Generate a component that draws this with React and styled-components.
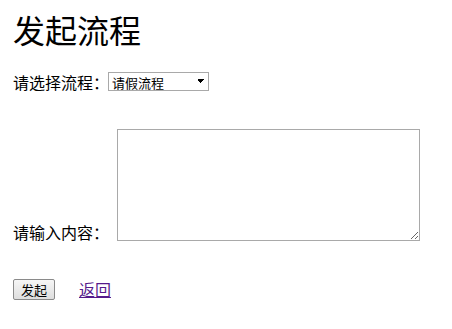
import React from 'react';
import styled, { createGlobalStyle } from 'styled-components';

const Global = createGlobalStyle`
    html, body { margin: 0; padding: 0; background: #fff; }
    body { font-family: "Liberation Serif", "Noto Sans CJK SC", serif; color: #000; }
`;

const Page = styled.div`
    padding: 10px 13px;
    font-size: 16px;
`;

const Title = styled.h1`
    margin: 0;
    font-family: "Noto Sans CJK SC", serif;
    font-weight: 400;
    font-size: 32px;
    line-height: 38px;
`;

const Row = styled.div`
    display: flex;
    align-items: ${p => p.$align || 'center'};
    gap: ${p => p.$gap || 0}px;
    margin-top: ${p => p.$top || 0}px;
`;

const Label = styled.span`
    font-family: "Noto Sans CJK SC", sans-serif;
    font-size: 16px;
    line-height: 18px;
`;

const Select = styled.select`
    width: 101px;
    height: 19px;
    margin-left: -1px;
    padding: 0 3px;
    font-family: "Noto Sans CJK SC", sans-serif;
    font-size: 13px;
    color: #000;
    border: 1px solid #a9a9a9;
    border-radius: 0;
    background: #fff;
    appearance: none;
    background-image: linear-gradient(45deg, transparent 50%, #000 50%), linear-gradient(135deg, #000 50%, transparent 50%);
    background-size: 3px 5px, 3px 5px;
    background-position: 89px 6px, 92px 6px;
    background-repeat: no-repeat;
`;

const Area = styled.textarea`
    width: 303px;
    height: 112px;
    box-sizing: border-box;
    border: 1px solid #a9a9a9;
    border-radius: 0;
    resize: both;
    margin: 0;
`;

const Button = styled.button`
    width: 42px;
    height: 21px;
    padding: 0;
    font-family: "Noto Sans CJK SC", sans-serif;
    font-size: 13px;
    line-height: 17px;
    color: #000;
    border: 1px solid #8a8a8a;
    border-radius: 2px;
    background: linear-gradient(#f6f6f6, #dedede);
`;

const Back = styled.a`
    font-family: "Noto Sans CJK SC", sans-serif;
    font-size: 16px;
    color: #551a8b;
    text-decoration: underline;
`;

export default function App() {
    return (
        <Page>
            <Global />
            <Title>发起流程</Title>
            <Row $top={24} $gap={0}>
                <Label>请选择流程：</Label>
                <Select defaultValue="leave">
                    <option value="leave">请假流程</option>
                </Select>
            </Row>
            <Row $top={38} $align="flex-end" $gap={8}>
                <Label>请输入内容：</Label>
                <Area />
            </Row>
            <Row $top={36} $gap={24}>
                <Button>发起</Button>
                <Back href="#">返回</Back>
            </Row>
        </Page>
    );
}
